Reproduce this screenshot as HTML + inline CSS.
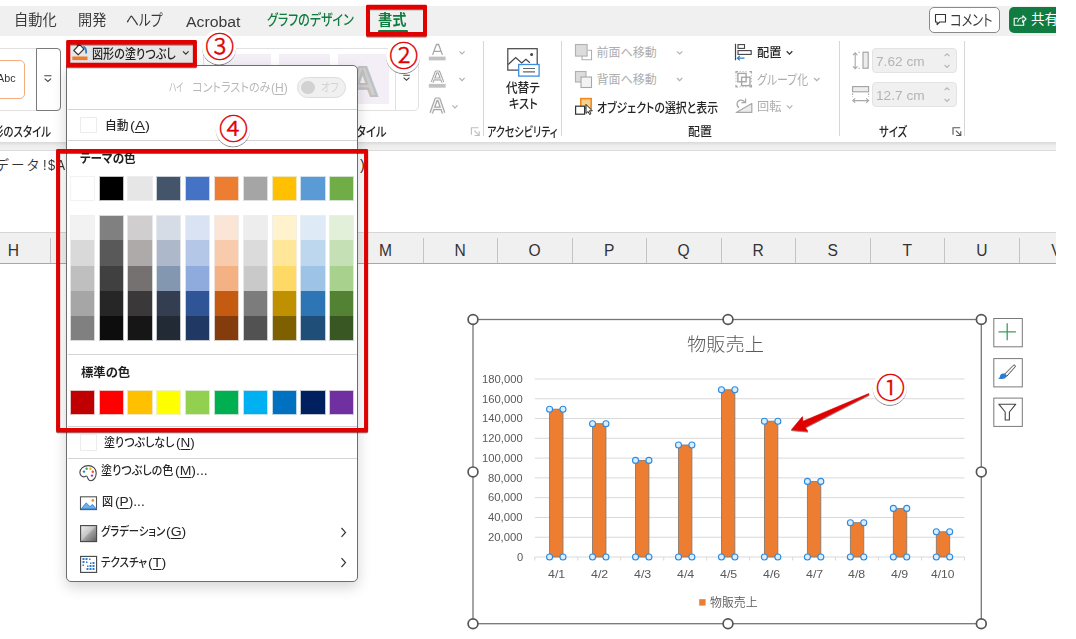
<!DOCTYPE html>
<html lang="ja"><head><meta charset="utf-8"><title>図形の塗りつぶし</title>
<style>
html,body{margin:0;padding:0;background:#fff;}
body{width:1076px;height:639px;overflow:hidden;position:relative;font-family:"Liberation Sans","Noto Sans CJK JP",sans-serif;}
#app{position:absolute;left:0;top:0;width:1056px;height:639px;overflow:hidden;background:#fff;}
.a{position:absolute;}
.t{position:absolute;white-space:nowrap;line-height:1.5;transform-origin:0 50%;font-feature-settings:"palt";}
u{text-decoration-thickness:1px;text-underline-offset:2px;}
svg{position:absolute;left:0;top:0;overflow:visible;}
.sw{position:absolute;width:25.200px;}
</style></head><body><div id="app">
<div class="a" style="left:0;top:6px;width:1056px;height:29.5px;background:#f0f0f0;"></div>
<div class="a" style="left:0;top:141.7px;width:1056px;height:9px;background:linear-gradient(#d9d9d9,#ededed 45%,#f1f1f1);border-bottom:1px solid #dadada;box-sizing:border-box;"></div>
<div class="a" style="left:0;top:231.5px;width:1056px;height:32px;background:#f0f0f0;border-top:1px solid #d6d6d6;border-bottom:1px solid #a8a8a8;box-sizing:border-box;"></div>
<div class="a" style="left:49.9px;top:238px;width:1px;height:25px;background:#c4c4c4;"></div>
<div class="a" style="left:422.5px;top:238px;width:1px;height:25px;background:#c4c4c4;"></div>
<div class="a" style="left:497.0px;top:238px;width:1px;height:25px;background:#c4c4c4;"></div>
<div class="a" style="left:571.5px;top:238px;width:1px;height:25px;background:#c4c4c4;"></div>
<div class="a" style="left:646.0px;top:238px;width:1px;height:25px;background:#c4c4c4;"></div>
<div class="a" style="left:720.5px;top:238px;width:1px;height:25px;background:#c4c4c4;"></div>
<div class="a" style="left:795.0px;top:238px;width:1px;height:25px;background:#c4c4c4;"></div>
<div class="a" style="left:869.5px;top:238px;width:1px;height:25px;background:#c4c4c4;"></div>
<div class="a" style="left:944.0px;top:238px;width:1px;height:25px;background:#c4c4c4;"></div>
<div class="a" style="left:1018.5px;top:238px;width:1px;height:25px;background:#c4c4c4;"></div>
<span class="t" style="left:5.50px;top:239.40px;font-size:15.60px;color:#333;width:16px;text-align:center;">H</span>
<span class="t" style="left:377.60px;top:239.40px;font-size:15.60px;color:#333;width:16px;text-align:center;">M</span>
<span class="t" style="left:452.20px;top:239.40px;font-size:15.60px;color:#333;width:16px;text-align:center;">N</span>
<span class="t" style="left:526.70px;top:239.40px;font-size:15.60px;color:#333;width:16px;text-align:center;">O</span>
<span class="t" style="left:601.20px;top:239.40px;font-size:15.60px;color:#333;width:16px;text-align:center;">P</span>
<span class="t" style="left:675.70px;top:239.40px;font-size:15.60px;color:#333;width:16px;text-align:center;">Q</span>
<span class="t" style="left:750.20px;top:239.40px;font-size:15.60px;color:#333;width:16px;text-align:center;">R</span>
<span class="t" style="left:824.70px;top:239.40px;font-size:15.60px;color:#333;width:16px;text-align:center;">S</span>
<span class="t" style="left:899.20px;top:239.40px;font-size:15.60px;color:#333;width:16px;text-align:center;">T</span>
<span class="t" style="left:973.80px;top:239.40px;font-size:15.60px;color:#333;width:16px;text-align:center;">U</span>
<span class="t" style="left:1048.50px;top:239.40px;font-size:15.60px;color:#333;width:16px;text-align:center;">V</span>
<span class="t" style="left:14.20px;top:10.47px;font-size:14.30px;color:#3a3a3a;transform:scaleX(0.9932);">自動化</span>
<span class="t" style="left:77.50px;top:10.47px;font-size:14.30px;color:#3a3a3a;transform:scaleX(0.9897);">開発</span>
<span class="t" style="left:126.40px;top:9.38px;font-size:15.50px;color:#3a3a3a;transform:scaleX(0.8228);">ヘルプ</span>
<span class="t" style="left:185.70px;top:9.68px;font-size:15.50px;color:#3a3a3a;transform:scaleX(1.0202);">Acrobat</span>
<span class="t" style="left:266.60px;top:10.43px;font-size:14.50px;color:#107c41;font-weight:500;transform:scaleX(0.8274);">グラフのデザイン</span>
<span class="t" style="left:378.10px;top:10.32px;font-size:14.50px;color:#107c41;font-weight:700;transform:scaleX(0.9828);">書式</span>
<div class="a" style="left:378px;top:30.200px;width:30px;height:2.500px;background:#107c41;border-radius:1.200px;"></div>
<div class="a" style="left:929.3px;top:7px;width:70.500px;height:25.700px;box-sizing:border-box;border:1px solid #8a8a8a;border-radius:5px;background:#fff;"></div>
<svg width="1076" height="639"><path d="M935.5 14.5h10v7.5h-5.8l-2.6 2.6v-2.6h-1.6z" fill="none" stroke="#333" stroke-width="1.1" stroke-linejoin="round"/></svg>
<span class="t" style="left:950.40px;top:8.57px;font-size:15.50px;color:#3a3a3a;transform:scaleX(0.7891);">コメント</span>
<div class="a" style="left:1008.7px;top:7px;width:60px;height:25.7px;border-radius:5px;background:#107c41;"></div>
<svg width="1076" height="639"><path d="M1017.500 18.300h-3.300v7h9.500v-2.800M1017.800 22c.400-2.700 2.300-4.200 5-4.200v-2.100l3.200 3.300-3.200 3.300v-2.200" fill="none" stroke="#fff" stroke-width="1.1" stroke-linejoin="round" stroke-linecap="round"/></svg>
<span class="t" style="left:1031.00px;top:10.07px;font-size:13.50px;color:#fff;">共有</span>
<div class="a" style="left:-10px;top:48px;width:70.5px;height:63px;box-sizing:border-box;border:1px solid #e1e1e1;border-radius:0 4px 4px 0;"></div>
<div class="a" style="left:-10px;top:59.5px;width:35px;height:39.5px;box-sizing:border-box;border:1.400px solid #f3ae7e;border-radius:5px;background:#fff;"></div>
<span class="t" style="left:-3.50px;top:70.53px;font-size:10.50px;color:#333;transform:scaleX(1.0225);">Abc</span>
<div class="a" style="left:36px;top:48px;width:24.5px;height:63px;box-sizing:border-box;border:1px solid #7a7a7a;border-radius:0 4px 4px 0;background:#fff;"></div>
<svg width="1076" height="639"><path d="M44.300 75.800h7.200M44.700 78.600l3.200 2.800 3.200-2.800" fill="none" stroke="#444" stroke-width="1.1"/></svg>
<span class="t" style="left:-7.00px;top:122.35px;font-size:13.00px;color:#262626;font-weight:500;transform:scaleX(0.8033);">形のスタイル</span>
<div class="a" style="left:68px;top:42px;width:127px;height:23.5px;background:#e6e6e6;"></div>
<svg width="1076" height="639">
<rect x="72.300" y="56.500" width="15.200" height="3.600" fill="#ed7d31"/>
<path d="M79.500 44.300L73.800 50.500L78.200 54.800L84 49Z" fill="#fff" stroke="#3a3a3a" stroke-width="1.200" stroke-linejoin="round"/>
<path d="M79.200 44.200c-1.600-1.200-2.800.2-1.600 1.800" fill="none" stroke="#3a3a3a" stroke-width="1"/>
<path d="M83.400 46.600c2.200 1 3 3.600 2.700 6.900" fill="none" stroke="#2b7cd3" stroke-width="1.800"/>
</svg>
<span class="t" style="left:92.00px;top:43.65px;font-size:13.00px;color:#262626;font-weight:500;transform:scaleX(0.8534);">図形の塗りつぶし</span>
<svg width="1076" height="639"><path d="M183 51.300l2.800 2.800 2.800-2.800" fill="none" stroke="#333" stroke-width="1.200"/></svg>
<div class="a" style="left:203.400px;top:48px;width:215.300px;height:62.500px;box-sizing:border-box;border:1px solid #e1e1e1;border-radius:0 0 5px 0;"></div>
<div class="a" style="left:394.500px;top:48px;width:1px;height:62px;background:#e1e1e1;"></div>
<div class="a" style="left:220.3px;top:54px;width:50.500px;height:49.600px;background:#f4eff6;"></div>
<div class="a" style="left:279.2px;top:54px;width:50.500px;height:49.600px;background:#f4eff6;"></div>
<div class="a" style="left:338.3px;top:54px;width:50.500px;height:49.600px;background:#f4eff6;"></div>
<span class="t" style="left:347px;top:54.500px;font-size:43px;font-weight:700;line-height:1.25;color:#d0d0d0;-webkit-text-stroke:2.200px #c0c0c0;">A</span>
<svg width="1076" height="639"><path d="M403.300 75.200h6.500M403.600 77.600l2.900 2.600 2.900-2.600" fill="none" stroke="#444" stroke-width="1.100"/></svg>
<span class="t" style="left:346.00px;top:122.35px;font-size:13.00px;color:#262626;font-weight:500;transform:scaleX(0.8678);">スタイル</span>
<svg width="1076" height="639" fill="none" stroke="#b4b4b4">
<path d="M432.600 54.900L436.400 44.500h2.200L442.400 54.900M434.200 51.300h6.600" stroke-width="1.300" stroke="#a8a8a8"/>
<rect x="428.800" y="56.600" width="16.800" height="3.800" fill="#c2c2c2" stroke="none"/>
<path d="M432.200 82.200L436.200 71.900h2.600L442.800 82.200M434.200 78.900h6.800" stroke-width="3" stroke="#a4a4a4" stroke-linejoin="round"/>
<path d="M432.200 82.200L436.200 71.900h2.600L442.800 82.200M434.200 78.900h6.800" stroke-width="1" stroke="#fafafa"/>
<rect x="428.800" y="83.900" width="16.800" height="3.800" fill="#c2c2c2" stroke="none"/>
<path d="M431.200 113.200L436.200 99.300h2.600L443.600 113.200M433.600 108.400h7.800" stroke-width="3.800" stroke="#a6a6a6" stroke-linejoin="round"/>
<path d="M431.200 113.200L436.200 99.300h2.600L443.600 113.200M433.600 108.400h7.800" stroke-width="1.400" stroke="#f2f2f2"/>
<path d="M459.400 51.300l2.600 2.600 2.600-2.600M459.400 78l2.600 2.600 2.600-2.600M452.400 105.400l2.600 2.600 2.600-2.600" stroke-width="1.100" stroke="#b0b0b0"/>
<path d="M471.400 134.700v-7h7.200M474.300 130.700l4.800 4.600M479.200 131.200v4.300h-4.600" stroke="#bdbdbd" stroke-width="1.100"/>
</svg>
<div class="a" style="left:482.7px;top:41.300px;width:1px;height:94.500px;background:#d6d6d6;"></div>
<div class="a" style="left:561.2px;top:41.300px;width:1px;height:94.500px;background:#d6d6d6;"></div>
<div class="a" style="left:839.0px;top:41.300px;width:1px;height:94.500px;background:#d6d6d6;"></div>
<div class="a" style="left:964.1px;top:41.300px;width:1px;height:94.500px;background:#d6d6d6;"></div>
<svg width="1076" height="639" fill="none">
<rect x="507.800" y="48.700" width="29.400" height="21.400" stroke="#444" stroke-width="1.200" fill="#fff"/>
<path d="M508.200 64.500l7.500-7 6 5.500 4.200-3.600 4 3.400" stroke="#444" stroke-width="1.200"/>
<circle cx="531.600" cy="54.400" r="1.500" fill="#444"/>
<rect x="518.700" y="64.500" width="20.400" height="11.600" fill="#fff" stroke="#3b8ede" stroke-width="1.300"/>
<path d="M523 68.500h12M523 71.900h12" stroke="#666" stroke-width="1.100"/>
</svg>
<span class="t" style="left:505.80px;top:78.25px;font-size:13.00px;color:#262626;font-weight:500;transform:scaleX(0.8939);">代替テ</span>
<span class="t" style="left:508.60px;top:93.65px;font-size:13.00px;color:#262626;font-weight:500;transform:scaleX(0.8567);">キスト</span>
<span class="t" style="left:487.00px;top:122.35px;font-size:13.00px;color:#262626;font-weight:500;transform:scaleX(0.7722);">アクセシビリティ</span>
<svg width="1076" height="639" fill="none">
<path d="M582 55.800v4h9.500v-9.500h-3.600" stroke="#b0b0b0" stroke-width="1.100"/>
<rect x="575.500" y="44.500" width="11.600" height="11.600" fill="#dcdcdc" stroke="#b0b0b0" stroke-width="1.100"/>
<rect x="575.500" y="71.500" width="10.500" height="10.500" fill="#dcdcdc" stroke="#b0b0b0" stroke-width="1.100"/>
<rect x="581" y="77" width="10.500" height="10.500" fill="#f3f3f3" stroke="#a8a8a8" stroke-width="1.100"/>
<rect x="580.800" y="98.600" width="10.400" height="9.800" fill="#fbd088" stroke="#f08a24" stroke-width="1.600"/>
<rect x="575.600" y="106.200" width="9" height="8" fill="#fff" stroke="#333" stroke-width="1.200"/>
<path d="M586 104.400v9l2.100-1.900 1.500 3 1.300-.7-1.500-3h2.900z" fill="#fff" stroke="#222" stroke-width="1" stroke-linejoin="round"/>
<path d="M676.900 51.300l2.700 2.700 2.700-2.700M676.900 78l2.700 2.700 2.700-2.700" stroke="#b0b0b0" stroke-width="1.100"/>
</svg>
<span class="t" style="left:596.60px;top:44.30px;font-size:12.00px;color:#adadad;">前面へ移動</span>
<span class="t" style="left:596.60px;top:71.00px;font-size:12.00px;color:#adadad;">背面へ移動</span>
<span class="t" style="left:596.60px;top:97.55px;font-size:13.00px;color:#262626;font-weight:500;transform:scaleX(0.8386);">オブジェクトの選択と表示</span>
<span class="t" style="left:688.30px;top:123.10px;font-size:12.00px;color:#262626;font-weight:500;transform:scaleX(0.9910);">配置</span>
<svg width="1076" height="639" fill="none">
<path d="M735.500 43.800v16.500" stroke="#444" stroke-width="1.200"/>
<rect x="738" y="44.600" width="6.500" height="3.800" stroke="#444" stroke-width="1.100"/>
<rect x="738" y="50.600" width="13.200" height="3.800" stroke="#444" stroke-width="1.100"/>
<path d="M744.500 58.200h-7M739.800 56l-2.400 2.200 2.400 2.200" stroke="#2b7cd3" stroke-width="1.200"/>
<path d="M786.700 51.300l2.800 2.800 2.800-2.800" stroke="#333" stroke-width="1.300"/>
<path d="M736 73.600v-2h2M749.400 71.600h2v2M751.400 84.800v2h-2M738 86.800h-2v-2" stroke="#a8a8a8" stroke-width="1.300"/>
<path d="M736 75.200v8M751.400 75.200v8M739.600 71.600h8.400M739.600 86.800h8.400" stroke="#b4b4b4" stroke-width="1" stroke-dasharray="1.200 1.600"/>
<rect x="737.900" y="73.400" width="8.200" height="8.400" stroke="#a6a6a6" stroke-width="1.400"/>
<rect x="741.600" y="77.200" width="8.400" height="8.400" stroke="#a6a6a6" stroke-width="1.400"/>
<path d="M814.100 78l2.700 2.700 2.700-2.700M786.900 105.400l2.700 2.700 2.700-2.700" stroke="#b0b0b0" stroke-width="1.100"/>
<path d="M736.200 112.400h15.600v-9z" fill="#ececec" stroke="#a8a8a8" stroke-width="1.200" stroke-linejoin="round"/>
<path d="M739 107.800c-3.400-2.600-2-7.400 1.600-7.600 2-.1 3.400.8 4.600 2.200M745.600 98.400v4.200h-4.200" stroke="#a8a8a8" stroke-width="1.200"/>
</svg>
<span class="t" style="left:756.70px;top:44.30px;font-size:12.00px;color:#262626;font-weight:500;transform:scaleX(1.0160);">配置</span>
<span class="t" style="left:756.70px;top:70.25px;font-size:13.00px;color:#adadad;transform:scaleX(0.8418);">グループ化</span>
<span class="t" style="left:756.70px;top:98.30px;font-size:12.00px;color:#adadad;transform:scaleX(1.0160);">回転</span>
<div class="a" style="left:872.200px;top:48.2px;width:84.500px;height:24.800px;box-sizing:border-box;border:1px solid #e3e3e3;border-radius:4px;background:#f0f0f0;"></div>
<div class="a" style="left:872.200px;top:82.2px;width:84.500px;height:24.800px;box-sizing:border-box;border:1px solid #e3e3e3;border-radius:4px;background:#f0f0f0;"></div>
<span class="t" style="left:875.60px;top:51.85px;font-size:13.00px;color:#b4b4b4;transform:scaleX(1.0508);">7.62 cm</span>
<span class="t" style="left:875.60px;top:86.05px;font-size:13.00px;color:#b4b4b4;transform:scaleX(1.0508);">12.7 cm</span>
<svg width="1076" height="639" fill="none" stroke="#b4b4b4" stroke-width="1.100">
<path d="M944.600 56.200l2.400-2.400 2.400 2.400M944.600 65l2.400 2.400 2.400-2.400M944.600 90.200l2.400-2.400 2.400 2.400M944.600 99l2.400 2.400 2.400-2.400"/>
<rect x="863" y="52.200" width="5.200" height="16" fill="#ededed" stroke="#a0a0a0"/>
<path d="M855.200 53v15.600M853 55.200l2.200-2.400 2.200 2.400M853 66.400l2.200 2.400 2.200-2.400" stroke="#a8a8a8"/>
<path d="M858.300 52.200h3M858.300 68.200h3" stroke="#a8a8a8" stroke-dasharray="1.500 1.500"/>
<rect x="852.600" y="86.600" width="16" height="5.200" fill="#ededed" stroke="#a0a0a0"/>
<path d="M853 100.600h15.400M855.200 98.400l-2.400 2.200 2.400 2.200M866.200 98.400l2.400 2.200-2.400 2.200" stroke="#a8a8a8"/>
<path d="M852.600 93.500v3.500M868.600 93.500v3.500" stroke="#a8a8a8" stroke-dasharray="1.500 1.500"/>
<path d="M953 134.700v-7h7.200M955.900 130.700l4.800 4.600M960.800 131.200v4.300h-4.600" stroke="#555" stroke-width="1.100"/>
</svg>
<span class="t" style="left:878.80px;top:122.35px;font-size:13.00px;color:#262626;font-weight:500;transform:scaleX(0.7975);">サイズ</span>
<span class="t" style="left:-4.40px;top:155.57px;font-size:13.50px;color:#333;font-weight:350;font-feature-settings:normal;letter-spacing:1.800px;">データ</span>
<span class="t" style="left:43.30px;top:154.53px;font-size:14.50px;color:#333;transform:scaleX(0.8871);letter-spacing:1.500px;">!$A</span>
<span class="t" style="left:360.00px;top:154.53px;font-size:14.50px;color:#333;">)</span>
<svg width="1076" height="639" fill="none">
<rect x="473" y="319.500" width="508.300" height="304.200" fill="#fff" stroke="#767676" stroke-width="1.300"/>
<path d="M534.8 557.00H964.5" stroke="#d9d9d9" stroke-width="1"/>
<path d="M534.8 537.22H964.5" stroke="#d9d9d9" stroke-width="1"/>
<path d="M534.8 517.44H964.5" stroke="#d9d9d9" stroke-width="1"/>
<path d="M534.8 497.66H964.5" stroke="#d9d9d9" stroke-width="1"/>
<path d="M534.8 477.88H964.5" stroke="#d9d9d9" stroke-width="1"/>
<path d="M534.8 458.10H964.5" stroke="#d9d9d9" stroke-width="1"/>
<path d="M534.8 438.32H964.5" stroke="#d9d9d9" stroke-width="1"/>
<path d="M534.8 418.54H964.5" stroke="#d9d9d9" stroke-width="1"/>
<path d="M534.8 398.76H964.5" stroke="#d9d9d9" stroke-width="1"/>
<path d="M534.8 378.98H964.5" stroke="#d9d9d9" stroke-width="1"/>
<path d="M534.80 557.0v3.500" stroke="#d9d9d9" stroke-width="1"/>
<path d="M577.77 557.0v3.500" stroke="#d9d9d9" stroke-width="1"/>
<path d="M620.74 557.0v3.500" stroke="#d9d9d9" stroke-width="1"/>
<path d="M663.71 557.0v3.500" stroke="#d9d9d9" stroke-width="1"/>
<path d="M706.68 557.0v3.500" stroke="#d9d9d9" stroke-width="1"/>
<path d="M749.65 557.0v3.500" stroke="#d9d9d9" stroke-width="1"/>
<path d="M792.62 557.0v3.500" stroke="#d9d9d9" stroke-width="1"/>
<path d="M835.59 557.0v3.500" stroke="#d9d9d9" stroke-width="1"/>
<path d="M878.56 557.0v3.500" stroke="#d9d9d9" stroke-width="1"/>
<path d="M921.53 557.0v3.500" stroke="#d9d9d9" stroke-width="1"/>
<path d="M964.50 557.0v3.500" stroke="#d9d9d9" stroke-width="1"/>
<rect x="549.58" y="409.2" width="13.400" height="147.8" fill="#ed7d31" stroke="#8a7a70" stroke-width="0.900"/>
<rect x="592.55" y="423.7" width="13.400" height="133.3" fill="#ed7d31" stroke="#8a7a70" stroke-width="0.900"/>
<rect x="635.52" y="460.4" width="13.400" height="96.6" fill="#ed7d31" stroke="#8a7a70" stroke-width="0.900"/>
<rect x="678.49" y="445.0" width="13.400" height="112.0" fill="#ed7d31" stroke="#8a7a70" stroke-width="0.900"/>
<rect x="721.46" y="389.8" width="13.400" height="167.2" fill="#ed7d31" stroke="#8a7a70" stroke-width="0.900"/>
<rect x="764.43" y="421.2" width="13.400" height="135.8" fill="#ed7d31" stroke="#8a7a70" stroke-width="0.900"/>
<rect x="807.40" y="481.4" width="13.400" height="75.6" fill="#ed7d31" stroke="#8a7a70" stroke-width="0.900"/>
<rect x="850.38" y="522.7" width="13.400" height="34.3" fill="#ed7d31" stroke="#8a7a70" stroke-width="0.900"/>
<rect x="893.35" y="508.4" width="13.400" height="48.6" fill="#ed7d31" stroke="#8a7a70" stroke-width="0.900"/>
<rect x="936.31" y="531.8" width="13.400" height="25.2" fill="#ed7d31" stroke="#8a7a70" stroke-width="0.900"/>
<circle cx="549.58" cy="409.2" r="3" fill="#dbeeff" stroke="#2b8ae0" stroke-width="1.100"/>
<circle cx="562.99" cy="409.2" r="3" fill="#dbeeff" stroke="#2b8ae0" stroke-width="1.100"/>
<circle cx="549.58" cy="557.0" r="3" fill="#dbeeff" stroke="#2b8ae0" stroke-width="1.100"/>
<circle cx="562.99" cy="557.0" r="3" fill="#dbeeff" stroke="#2b8ae0" stroke-width="1.100"/>
<circle cx="592.55" cy="423.7" r="3" fill="#dbeeff" stroke="#2b8ae0" stroke-width="1.100"/>
<circle cx="605.96" cy="423.7" r="3" fill="#dbeeff" stroke="#2b8ae0" stroke-width="1.100"/>
<circle cx="592.55" cy="557.0" r="3" fill="#dbeeff" stroke="#2b8ae0" stroke-width="1.100"/>
<circle cx="605.96" cy="557.0" r="3" fill="#dbeeff" stroke="#2b8ae0" stroke-width="1.100"/>
<circle cx="635.52" cy="460.4" r="3" fill="#dbeeff" stroke="#2b8ae0" stroke-width="1.100"/>
<circle cx="648.92" cy="460.4" r="3" fill="#dbeeff" stroke="#2b8ae0" stroke-width="1.100"/>
<circle cx="635.52" cy="557.0" r="3" fill="#dbeeff" stroke="#2b8ae0" stroke-width="1.100"/>
<circle cx="648.92" cy="557.0" r="3" fill="#dbeeff" stroke="#2b8ae0" stroke-width="1.100"/>
<circle cx="678.49" cy="445.0" r="3" fill="#dbeeff" stroke="#2b8ae0" stroke-width="1.100"/>
<circle cx="691.89" cy="445.0" r="3" fill="#dbeeff" stroke="#2b8ae0" stroke-width="1.100"/>
<circle cx="678.49" cy="557.0" r="3" fill="#dbeeff" stroke="#2b8ae0" stroke-width="1.100"/>
<circle cx="691.89" cy="557.0" r="3" fill="#dbeeff" stroke="#2b8ae0" stroke-width="1.100"/>
<circle cx="721.46" cy="389.8" r="3" fill="#dbeeff" stroke="#2b8ae0" stroke-width="1.100"/>
<circle cx="734.87" cy="389.8" r="3" fill="#dbeeff" stroke="#2b8ae0" stroke-width="1.100"/>
<circle cx="721.46" cy="557.0" r="3" fill="#dbeeff" stroke="#2b8ae0" stroke-width="1.100"/>
<circle cx="734.87" cy="557.0" r="3" fill="#dbeeff" stroke="#2b8ae0" stroke-width="1.100"/>
<circle cx="764.43" cy="421.2" r="3" fill="#dbeeff" stroke="#2b8ae0" stroke-width="1.100"/>
<circle cx="777.84" cy="421.2" r="3" fill="#dbeeff" stroke="#2b8ae0" stroke-width="1.100"/>
<circle cx="764.43" cy="557.0" r="3" fill="#dbeeff" stroke="#2b8ae0" stroke-width="1.100"/>
<circle cx="777.84" cy="557.0" r="3" fill="#dbeeff" stroke="#2b8ae0" stroke-width="1.100"/>
<circle cx="807.40" cy="481.4" r="3" fill="#dbeeff" stroke="#2b8ae0" stroke-width="1.100"/>
<circle cx="820.81" cy="481.4" r="3" fill="#dbeeff" stroke="#2b8ae0" stroke-width="1.100"/>
<circle cx="807.40" cy="557.0" r="3" fill="#dbeeff" stroke="#2b8ae0" stroke-width="1.100"/>
<circle cx="820.81" cy="557.0" r="3" fill="#dbeeff" stroke="#2b8ae0" stroke-width="1.100"/>
<circle cx="850.38" cy="522.7" r="3" fill="#dbeeff" stroke="#2b8ae0" stroke-width="1.100"/>
<circle cx="863.78" cy="522.7" r="3" fill="#dbeeff" stroke="#2b8ae0" stroke-width="1.100"/>
<circle cx="850.38" cy="557.0" r="3" fill="#dbeeff" stroke="#2b8ae0" stroke-width="1.100"/>
<circle cx="863.78" cy="557.0" r="3" fill="#dbeeff" stroke="#2b8ae0" stroke-width="1.100"/>
<circle cx="893.35" cy="508.4" r="3" fill="#dbeeff" stroke="#2b8ae0" stroke-width="1.100"/>
<circle cx="906.75" cy="508.4" r="3" fill="#dbeeff" stroke="#2b8ae0" stroke-width="1.100"/>
<circle cx="893.35" cy="557.0" r="3" fill="#dbeeff" stroke="#2b8ae0" stroke-width="1.100"/>
<circle cx="906.75" cy="557.0" r="3" fill="#dbeeff" stroke="#2b8ae0" stroke-width="1.100"/>
<circle cx="936.31" cy="531.8" r="3" fill="#dbeeff" stroke="#2b8ae0" stroke-width="1.100"/>
<circle cx="949.72" cy="531.8" r="3" fill="#dbeeff" stroke="#2b8ae0" stroke-width="1.100"/>
<circle cx="936.31" cy="557.0" r="3" fill="#dbeeff" stroke="#2b8ae0" stroke-width="1.100"/>
<circle cx="949.72" cy="557.0" r="3" fill="#dbeeff" stroke="#2b8ae0" stroke-width="1.100"/>
<rect x="699.200" y="599.200" width="6.400" height="6.400" fill="#ed7d31"/>
<circle cx="473.0" cy="319.5" r="4.900" fill="#fff" stroke="#555" stroke-width="1.700"/>
<circle cx="728.0" cy="319.5" r="4.900" fill="#fff" stroke="#555" stroke-width="1.700"/>
<circle cx="981.3" cy="319.5" r="4.900" fill="#fff" stroke="#555" stroke-width="1.700"/>
<circle cx="473.0" cy="471.9" r="4.900" fill="#fff" stroke="#555" stroke-width="1.700"/>
<circle cx="981.3" cy="471.9" r="4.900" fill="#fff" stroke="#555" stroke-width="1.700"/>
<circle cx="473.0" cy="623.7" r="4.900" fill="#fff" stroke="#555" stroke-width="1.700"/>
<circle cx="728.0" cy="623.7" r="4.900" fill="#fff" stroke="#555" stroke-width="1.700"/>
<circle cx="981.3" cy="623.7" r="4.900" fill="#fff" stroke="#555" stroke-width="1.700"/>
<rect x="993.800" y="318.5" width="28.500" height="28.300" fill="#fff" stroke="#7a7a7a" stroke-width="1"/>
<rect x="993.800" y="358.6" width="28.500" height="28.300" fill="#fff" stroke="#7a7a7a" stroke-width="1"/>
<rect x="993.800" y="398.1" width="28.500" height="28.300" fill="#fff" stroke="#7a7a7a" stroke-width="1"/>
<path d="M1007.200 323.300v17M998.500 331.800h17.400" stroke="#3a9e62" stroke-width="1.300"/>
<path d="M1004.600 374.200l8.600-8.800c1.300-1.200 2.900.3 1.800 1.700l-8.200 9.200z" fill="#f0f0f0" stroke="#555" stroke-width="1"/>
<path d="M1004.400 373.600c-2.600-.8-4.200.8-4.400 2.600-.2 1.200-.8 1.800-2 2 3.600 1.800 8.200.6 9-2.400z" fill="#2b7cd3"/>
<path d="M998.800 404.200h17l-6.400 7.800v8h-4.200v-8z" fill="#fff" stroke="#444" stroke-width="1.100" stroke-linejoin="round"/>
</svg>
<span class="t" style="left:687.00px;top:331.20px;font-size:18.67px;color:#595959;font-weight:300;transform:scaleX(1.0318);">物販売上</span>
<span class="t" style="left:516.50px;top:548.80px;font-size:11.20px;color:#595959;transform:scaleX(0.9945);">0</span>
<span class="t" style="left:488.10px;top:529.02px;font-size:11.20px;color:#595959;transform:scaleX(1.0111);">20,000</span>
<span class="t" style="left:488.10px;top:509.24px;font-size:11.20px;color:#595959;transform:scaleX(1.0111);">40,000</span>
<span class="t" style="left:488.10px;top:489.46px;font-size:11.20px;color:#595959;transform:scaleX(1.0111);">60,000</span>
<span class="t" style="left:488.10px;top:469.68px;font-size:11.20px;color:#595959;transform:scaleX(1.0111);">80,000</span>
<span class="t" style="left:482.00px;top:449.90px;font-size:11.20px;color:#595959;transform:scaleX(1.0061);">100,000</span>
<span class="t" style="left:482.00px;top:430.12px;font-size:11.20px;color:#595959;transform:scaleX(1.0061);">120,000</span>
<span class="t" style="left:482.00px;top:410.34px;font-size:11.20px;color:#595959;transform:scaleX(1.0061);">140,000</span>
<span class="t" style="left:482.00px;top:390.56px;font-size:11.20px;color:#595959;transform:scaleX(1.0061);">160,000</span>
<span class="t" style="left:482.00px;top:370.78px;font-size:11.20px;color:#595959;transform:scaleX(1.0061);">180,000</span>
<span class="t" style="left:547.68px;top:566.10px;font-size:11.20px;color:#595959;transform:scaleX(1.1052);">4/1</span>
<span class="t" style="left:590.65px;top:566.10px;font-size:11.20px;color:#595959;transform:scaleX(1.1052);">4/2</span>
<span class="t" style="left:633.62px;top:566.10px;font-size:11.20px;color:#595959;transform:scaleX(1.1052);">4/3</span>
<span class="t" style="left:676.59px;top:566.10px;font-size:11.20px;color:#595959;transform:scaleX(1.1052);">4/4</span>
<span class="t" style="left:719.56px;top:566.10px;font-size:11.20px;color:#595959;transform:scaleX(1.1052);">4/5</span>
<span class="t" style="left:762.53px;top:566.10px;font-size:11.20px;color:#595959;transform:scaleX(1.1052);">4/6</span>
<span class="t" style="left:805.50px;top:566.10px;font-size:11.20px;color:#595959;transform:scaleX(1.1052);">4/7</span>
<span class="t" style="left:848.48px;top:566.10px;font-size:11.20px;color:#595959;transform:scaleX(1.1052);">4/8</span>
<span class="t" style="left:891.45px;top:566.10px;font-size:11.20px;color:#595959;transform:scaleX(1.1052);">4/9</span>
<span class="t" style="left:931.31px;top:566.10px;font-size:11.20px;color:#595959;transform:scaleX(1.0743);">4/10</span>
<span class="t" style="left:710.00px;top:594.20px;font-size:12.00px;color:#595959;font-weight:350;transform:scaleX(0.9913);">物販売上</span>
<div class="a" style="left:66.2px;top:65.0px;width:291.6px;height:517.2px;box-sizing:border-box;background:#fff;border:1.300px solid #6e6e6e;border-radius:0 5px 5px 5px;box-shadow:0 5px 14px rgba(0,0,0,.17);"></div>
<span class="t" style="left:169.20px;top:78.80px;font-size:12.00px;color:#b9b9b9;transform:scaleX(0.6496);">ハイ</span>
<span class="t" style="left:191.50px;top:78.80px;font-size:12.00px;color:#b9b9b9;transform:scaleX(0.9259);">コントラストのみ</span>
<span class="t" style="left:271.20px;top:78.80px;font-size:12.00px;color:#b9b9b9;transform:scaleX(1.0077);">(<u>H</u>)</span>
<div class="a" style="left:297.100px;top:77.300px;width:48.900px;height:20.600px;box-sizing:border-box;border:1px solid #dcdcdc;border-radius:11px;background:#f0f0f0;"></div>
<div class="a" style="left:301.400px;top:80.800px;width:13.700px;height:13.700px;border-radius:7px;background:#d2d2d2;"></div>
<span class="t" style="left:321.40px;top:78.80px;font-size:12.00px;color:#d4d4d4;transform:scaleX(0.8356);">オフ</span>
<div class="a" style="left:67.500px;top:108.7px;width:289px;height:1px;background:#d4d4d4;"></div>
<div class="a" style="left:67.500px;top:140.2px;width:289px;height:1px;background:#d4d4d4;"></div>
<div class="a" style="left:67.500px;top:354.0px;width:289px;height:1px;background:#d4d4d4;"></div>
<div class="a" style="left:67.500px;top:426.3px;width:289px;height:1px;background:#d4d4d4;"></div>
<div class="a" style="left:67.500px;top:457.5px;width:289px;height:1px;background:#d4d4d4;"></div>
<div class="a" style="left:80.300px;top:116.900px;width:16.300px;height:16.300px;box-sizing:border-box;border:1px solid #ececec;"></div>
<span class="t" style="left:105.00px;top:117.40px;font-size:12.00px;color:#262626;font-weight:500;transform:scaleX(0.9785);">自動</span>
<span class="t" style="left:129.90px;top:117.40px;font-size:12.00px;color:#262626;transform:scaleX(1.2425);">(<u>A</u>)</span>
<span class="t" style="left:79.90px;top:149.80px;font-size:12.00px;color:#1f1f1f;font-weight:700;transform:scaleX(0.9663);">テーマの色</span>
<div class="sw" style="left:69.70px;top:176px;height:24.600px;background:#FFFFFF;box-shadow:inset 0 0 0 1px rgba(236,239,240,.8);"></div>
<div class="sw" style="left:69.70px;top:215.1px;height:25.5px;background:#F2F2F2;"></div>
<div class="sw" style="left:69.70px;top:240.4px;height:25.4px;background:#D9D9D9;"></div>
<div class="sw" style="left:69.70px;top:265.6px;height:25.4px;background:#BFBFBF;"></div>
<div class="sw" style="left:69.70px;top:290.8px;height:25.3px;background:#A6A6A6;"></div>
<div class="sw" style="left:69.70px;top:315.9px;height:25.2px;background:#808080;"></div>
<div class="sw" style="left:69.70px;top:215.100px;height:125.800px;box-shadow:inset 0 0 0 1px rgba(236,239,240,.8);"></div>
<div class="sw" style="left:69.70px;top:390.400px;height:24.400px;background:#C00000;box-shadow:inset 0 0 0 1px rgba(236,239,240,.8);"></div>
<div class="sw" style="left:98.54px;top:176px;height:24.600px;background:#000000;box-shadow:inset 0 0 0 1px rgba(236,239,240,.8);"></div>
<div class="sw" style="left:98.54px;top:215.1px;height:25.5px;background:#808080;"></div>
<div class="sw" style="left:98.54px;top:240.4px;height:25.4px;background:#595959;"></div>
<div class="sw" style="left:98.54px;top:265.6px;height:25.4px;background:#404040;"></div>
<div class="sw" style="left:98.54px;top:290.8px;height:25.3px;background:#262626;"></div>
<div class="sw" style="left:98.54px;top:315.9px;height:25.2px;background:#0D0D0D;"></div>
<div class="sw" style="left:98.54px;top:215.100px;height:125.800px;box-shadow:inset 0 0 0 1px rgba(236,239,240,.8);"></div>
<div class="sw" style="left:98.54px;top:390.400px;height:24.400px;background:#FF0000;box-shadow:inset 0 0 0 1px rgba(236,239,240,.8);"></div>
<div class="sw" style="left:127.38px;top:176px;height:24.600px;background:#E7E6E6;box-shadow:inset 0 0 0 1px rgba(236,239,240,.8);"></div>
<div class="sw" style="left:127.38px;top:215.1px;height:25.5px;background:#D0CECE;"></div>
<div class="sw" style="left:127.38px;top:240.4px;height:25.4px;background:#AEAAAA;"></div>
<div class="sw" style="left:127.38px;top:265.6px;height:25.4px;background:#757171;"></div>
<div class="sw" style="left:127.38px;top:290.8px;height:25.3px;background:#3A3838;"></div>
<div class="sw" style="left:127.38px;top:315.9px;height:25.2px;background:#161616;"></div>
<div class="sw" style="left:127.38px;top:215.100px;height:125.800px;box-shadow:inset 0 0 0 1px rgba(236,239,240,.8);"></div>
<div class="sw" style="left:127.38px;top:390.400px;height:24.400px;background:#FFC000;box-shadow:inset 0 0 0 1px rgba(236,239,240,.8);"></div>
<div class="sw" style="left:156.22px;top:176px;height:24.600px;background:#44546A;box-shadow:inset 0 0 0 1px rgba(236,239,240,.8);"></div>
<div class="sw" style="left:156.22px;top:215.1px;height:25.5px;background:#D6DCE5;"></div>
<div class="sw" style="left:156.22px;top:240.4px;height:25.4px;background:#ADB9CA;"></div>
<div class="sw" style="left:156.22px;top:265.6px;height:25.4px;background:#8497B0;"></div>
<div class="sw" style="left:156.22px;top:290.8px;height:25.3px;background:#333F50;"></div>
<div class="sw" style="left:156.22px;top:315.9px;height:25.2px;background:#222A35;"></div>
<div class="sw" style="left:156.22px;top:215.100px;height:125.800px;box-shadow:inset 0 0 0 1px rgba(236,239,240,.8);"></div>
<div class="sw" style="left:156.22px;top:390.400px;height:24.400px;background:#FFFF00;box-shadow:inset 0 0 0 1px rgba(236,239,240,.8);"></div>
<div class="sw" style="left:185.06px;top:176px;height:24.600px;background:#4472C4;box-shadow:inset 0 0 0 1px rgba(236,239,240,.8);"></div>
<div class="sw" style="left:185.06px;top:215.1px;height:25.5px;background:#DAE3F3;"></div>
<div class="sw" style="left:185.06px;top:240.4px;height:25.4px;background:#B4C7E7;"></div>
<div class="sw" style="left:185.06px;top:265.6px;height:25.4px;background:#8FAADC;"></div>
<div class="sw" style="left:185.06px;top:290.8px;height:25.3px;background:#2F5597;"></div>
<div class="sw" style="left:185.06px;top:315.9px;height:25.2px;background:#203864;"></div>
<div class="sw" style="left:185.06px;top:215.100px;height:125.800px;box-shadow:inset 0 0 0 1px rgba(236,239,240,.8);"></div>
<div class="sw" style="left:185.06px;top:390.400px;height:24.400px;background:#92D050;box-shadow:inset 0 0 0 1px rgba(236,239,240,.8);"></div>
<div class="sw" style="left:213.90px;top:176px;height:24.600px;background:#ED7D31;box-shadow:inset 0 0 0 1px rgba(236,239,240,.8);"></div>
<div class="sw" style="left:213.90px;top:215.1px;height:25.5px;background:#FBE5D6;"></div>
<div class="sw" style="left:213.90px;top:240.4px;height:25.4px;background:#F8CBAD;"></div>
<div class="sw" style="left:213.90px;top:265.6px;height:25.4px;background:#F4B183;"></div>
<div class="sw" style="left:213.90px;top:290.8px;height:25.3px;background:#C55A11;"></div>
<div class="sw" style="left:213.90px;top:315.9px;height:25.2px;background:#843C0C;"></div>
<div class="sw" style="left:213.90px;top:215.100px;height:125.800px;box-shadow:inset 0 0 0 1px rgba(236,239,240,.8);"></div>
<div class="sw" style="left:213.90px;top:390.400px;height:24.400px;background:#00B050;box-shadow:inset 0 0 0 1px rgba(236,239,240,.8);"></div>
<div class="sw" style="left:242.74px;top:176px;height:24.600px;background:#A5A5A5;box-shadow:inset 0 0 0 1px rgba(236,239,240,.8);"></div>
<div class="sw" style="left:242.74px;top:215.1px;height:25.5px;background:#EDEDED;"></div>
<div class="sw" style="left:242.74px;top:240.4px;height:25.4px;background:#DBDBDB;"></div>
<div class="sw" style="left:242.74px;top:265.6px;height:25.4px;background:#C9C9C9;"></div>
<div class="sw" style="left:242.74px;top:290.8px;height:25.3px;background:#7C7C7C;"></div>
<div class="sw" style="left:242.74px;top:315.9px;height:25.2px;background:#525252;"></div>
<div class="sw" style="left:242.74px;top:215.100px;height:125.800px;box-shadow:inset 0 0 0 1px rgba(236,239,240,.8);"></div>
<div class="sw" style="left:242.74px;top:390.400px;height:24.400px;background:#00B0F0;box-shadow:inset 0 0 0 1px rgba(236,239,240,.8);"></div>
<div class="sw" style="left:271.58px;top:176px;height:24.600px;background:#FFC000;box-shadow:inset 0 0 0 1px rgba(236,239,240,.8);"></div>
<div class="sw" style="left:271.58px;top:215.1px;height:25.5px;background:#FFF2CC;"></div>
<div class="sw" style="left:271.58px;top:240.4px;height:25.4px;background:#FFE699;"></div>
<div class="sw" style="left:271.58px;top:265.6px;height:25.4px;background:#FFD966;"></div>
<div class="sw" style="left:271.58px;top:290.8px;height:25.3px;background:#BF9000;"></div>
<div class="sw" style="left:271.58px;top:315.9px;height:25.2px;background:#7F6000;"></div>
<div class="sw" style="left:271.58px;top:215.100px;height:125.800px;box-shadow:inset 0 0 0 1px rgba(236,239,240,.8);"></div>
<div class="sw" style="left:271.58px;top:390.400px;height:24.400px;background:#0070C0;box-shadow:inset 0 0 0 1px rgba(236,239,240,.8);"></div>
<div class="sw" style="left:300.42px;top:176px;height:24.600px;background:#5B9BD5;box-shadow:inset 0 0 0 1px rgba(236,239,240,.8);"></div>
<div class="sw" style="left:300.42px;top:215.1px;height:25.5px;background:#DEEBF7;"></div>
<div class="sw" style="left:300.42px;top:240.4px;height:25.4px;background:#BDD7EE;"></div>
<div class="sw" style="left:300.42px;top:265.6px;height:25.4px;background:#9DC3E6;"></div>
<div class="sw" style="left:300.42px;top:290.8px;height:25.3px;background:#2E75B6;"></div>
<div class="sw" style="left:300.42px;top:315.9px;height:25.2px;background:#1F4E79;"></div>
<div class="sw" style="left:300.42px;top:215.100px;height:125.800px;box-shadow:inset 0 0 0 1px rgba(236,239,240,.8);"></div>
<div class="sw" style="left:300.42px;top:390.400px;height:24.400px;background:#002060;box-shadow:inset 0 0 0 1px rgba(236,239,240,.8);"></div>
<div class="sw" style="left:329.26px;top:176px;height:24.600px;background:#70AD47;box-shadow:inset 0 0 0 1px rgba(236,239,240,.8);"></div>
<div class="sw" style="left:329.26px;top:215.1px;height:25.5px;background:#E2F0D9;"></div>
<div class="sw" style="left:329.26px;top:240.4px;height:25.4px;background:#C5E0B4;"></div>
<div class="sw" style="left:329.26px;top:265.6px;height:25.4px;background:#A9D18E;"></div>
<div class="sw" style="left:329.26px;top:290.8px;height:25.3px;background:#548235;"></div>
<div class="sw" style="left:329.26px;top:315.9px;height:25.2px;background:#385723;"></div>
<div class="sw" style="left:329.26px;top:215.100px;height:125.800px;box-shadow:inset 0 0 0 1px rgba(236,239,240,.8);"></div>
<div class="sw" style="left:329.26px;top:390.400px;height:24.400px;background:#7030A0;box-shadow:inset 0 0 0 1px rgba(236,239,240,.8);"></div>
<span class="t" style="left:80.80px;top:364.40px;font-size:12.00px;color:#1f1f1f;font-weight:700;transform:scaleX(1.0283);">標準の色</span>
<div class="a" style="left:80px;top:434.300px;width:16.600px;height:16.300px;box-sizing:border-box;border:1px solid #ececec;"></div>
<span class="t" style="left:104.30px;top:434.20px;font-size:12.00px;color:#262626;font-weight:500;transform:scaleX(0.9156);">塗りつぶしなし</span>
<span class="t" style="left:175.70px;top:434.20px;font-size:12.00px;color:#262626;transform:scaleX(1.1216);">(<u>N</u>)</span>
<span class="t" style="left:100.90px;top:462.00px;font-size:12.00px;color:#262626;font-weight:500;transform:scaleX(0.9219);">塗りつぶしの色</span>
<span class="t" style="left:174.80px;top:462.00px;font-size:12.00px;color:#262626;transform:scaleX(1.1679);">(<u>M</u>)...</span>
<span class="t" style="left:102.00px;top:493.20px;font-size:12.00px;color:#262626;font-weight:500;transform:scaleX(0.9238);">図</span>
<span class="t" style="left:115.10px;top:493.20px;font-size:12.00px;color:#262626;transform:scaleX(1.1416);">(<u>P</u>)...</span>
<span class="t" style="left:100.90px;top:523.00px;font-size:12.00px;color:#262626;font-weight:500;transform:scaleX(0.8602);">グラデーション</span>
<span class="t" style="left:166.40px;top:523.00px;font-size:12.00px;color:#262626;transform:scaleX(1.1705);">(<u>G</u>)</span>
<span class="t" style="left:100.90px;top:553.80px;font-size:12.00px;color:#262626;font-weight:500;transform:scaleX(0.8739);">テクスチャ</span>
<span class="t" style="left:148.10px;top:553.80px;font-size:12.00px;color:#262626;transform:scaleX(1.1927);">(<u>T</u>)</span>
<svg width="1076" height="639" fill="none">
<path d="M88.200 465.600c-4.600 0-8.300 3.200-8.300 7 0 2.600 2 4.300 3.800 4.300 1.700 0 2-.9 2.700-.9 1.600 0 .7 4.700 4.200 4.700 3.400 0 5.600-3.800 5.600-7.600 0-4.400-3.500-7.500-8-7.500z" fill="#fff" stroke="#444" stroke-width="1.100"/>
<circle cx="84" cy="471.600" r="1.200" fill="#2b7cd3"/><circle cx="86.600" cy="468.800" r="1.200" fill="#3aa655"/><circle cx="90.400" cy="468.800" r="1.200" fill="#f2b600"/><circle cx="92.800" cy="471.800" r="1.200" fill="#e8542a"/><circle cx="92" cy="475.600" r="1.200" fill="#8e44ad"/>
<rect x="80.500" y="496.800" width="16" height="12.800" fill="#fff" stroke="#555" stroke-width="1.100"/>
<path d="M81.200 508.900l5-6 3.800 3.800 2.400-2.200 3.800 4.400z" fill="#6fb0ea" stroke="#2b7cd3" stroke-width="0.900" stroke-linejoin="round"/>
<circle cx="92.800" cy="500.400" r="1.300" fill="#f08a24"/>
<defs><linearGradient id="gg" x1="0" y1="0" x2="1" y2="1"><stop offset="0" stop-color="#f2f2f2"/><stop offset="0.480" stop-color="#c4c4c4"/><stop offset="0.520" stop-color="#a4a4a4"/><stop offset="1" stop-color="#5c5c5c"/></linearGradient></defs>
<rect x="80.600" y="525.600" width="16" height="16" fill="url(#gg)" stroke="#444" stroke-width="1.100"/>
<rect x="80.600" y="556.400" width="16" height="16" fill="#fff" stroke="#444" stroke-width="1.100"/>
<path d="M82.500 558h2v2h-2zM85.500 558h2v2h-2zM82.500 561h2v2h-2zM86 561.500h1.500v1.500h-1.500zM89 558.500h1.500v1.500h-1.500zM82.500 564.500h1.500v1.500h-1.500zM92.500 562h2v2h-2zM92.500 565h2v2h-2zM92.500 568h2v2h-2zM89.500 565h2v2h-2zM89.500 568h2v2h-2zM86.500 568h2v2h-2zM90 562.500h1.500v1.500h-1.500zM87 565.500h1.500v1.500h-1.500z" fill="#2b7cd3"/>
<path d="M341.500 528l4 4.400-4 4.400M341.500 558.200l4 4.400-4 4.400" stroke="#333" stroke-width="1.200"/>
</svg>
<svg width="1076" height="639" fill="none">
<defs><filter id="sh" x="-20%" y="-20%" width="140%" height="150%"><feDropShadow dx="0" dy="1" stdDeviation="0.700" flood-color="#000" flood-opacity="0.550"/></filter></defs>
<path d="M367.40 4.80H425.60A1.4 1.4 0 0 1 427.00 6.20V35.00A1.4 1.4 0 0 1 425.60 36.40H367.40A1.4 1.4 0 0 1 366.00 35.00V6.20A1.4 1.4 0 0 1 367.40 4.80ZM370.00 9.30V31.90H423.00V9.30Z" fill="#e00000" fill-rule="evenodd" filter="url(#sh)"/>
<path d="M67.60 39.90H195.50A1.4 1.4 0 0 1 196.90 41.30V65.90A1.4 1.4 0 0 1 195.50 67.30H67.60A1.4 1.4 0 0 1 66.20 65.90V41.30A1.4 1.4 0 0 1 67.60 39.90ZM70.20 44.40V62.80H192.90V44.40Z" fill="#e00000" fill-rule="evenodd" filter="url(#sh)"/>
<path d="M57.50 148.90H366.70A1.4 1.4 0 0 1 368.10 150.30V430.80A1.4 1.4 0 0 1 366.70 432.20H57.50A1.4 1.4 0 0 1 56.10 430.80V150.30A1.4 1.4 0 0 1 57.50 148.90ZM60.10 153.00V428.10H364.10V153.00Z" fill="#e00000" fill-rule="evenodd" filter="url(#sh)"/>
<path d="M868.800 393.500L802.800 421.300L802.400 416.600L791.400 429.700L807.800 431.200L805.200 427.300L869.100 394.500Z" fill="#e00000" stroke="#e00000" stroke-width="0.600" stroke-linejoin="round" filter="url(#sh)"/>
<circle cx="219.1" cy="47.1" r="17.100" fill="#fff" filter="url(#sh)"/>
<circle cx="403.1" cy="56.0" r="17.100" fill="#fff" filter="url(#sh)"/>
<circle cx="232.9" cy="129.2" r="17.100" fill="#fff" filter="url(#sh)"/>
<circle cx="889.8" cy="387.7" r="17.100" fill="#fff" filter="url(#sh)"/>
</svg>
<span class="t" style="left:205.20px;top:34.10px;font-size:29px;line-height:1;font-weight:300;color:#e00000;-webkit-text-stroke:0.500px #e00000;font-feature-settings:normal;">③</span>
<span class="t" style="left:389.20px;top:43.00px;font-size:29px;line-height:1;font-weight:300;color:#e00000;-webkit-text-stroke:0.500px #e00000;font-feature-settings:normal;">②</span>
<span class="t" style="left:219.00px;top:116.20px;font-size:29px;line-height:1;font-weight:300;color:#e00000;-webkit-text-stroke:0.500px #e00000;font-feature-settings:normal;">④</span>
<span class="t" style="left:875.90px;top:374.70px;font-size:29px;line-height:1;font-weight:300;color:#e00000;-webkit-text-stroke:0.500px #e00000;font-feature-settings:normal;">①</span></div></body></html>
